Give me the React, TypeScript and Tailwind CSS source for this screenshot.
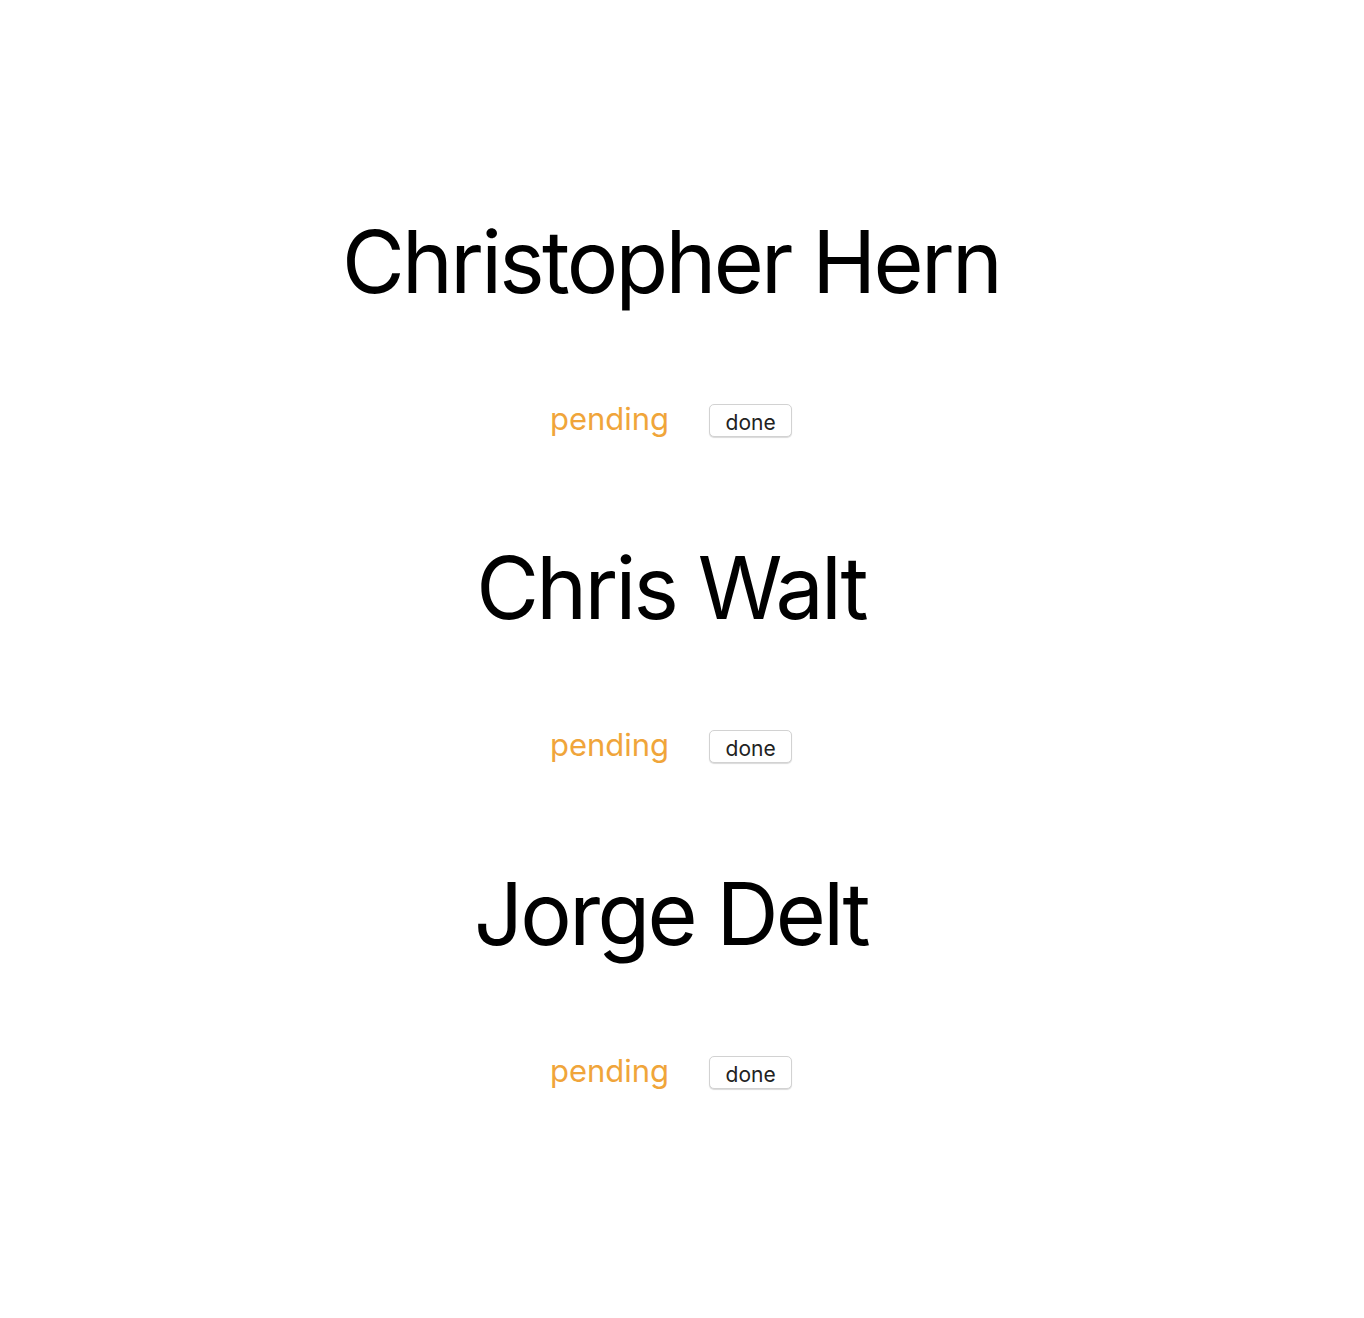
import React from "react";

const names = ["Christopher Hern", "Chris Walt", "Jorge Delt"];

export default function App() {
  return (
    <div className="min-h-[1318px] bg-white w-[1342px] pt-[212px]" style={{ fontFamily: "Inter, 'Liberation Sans', sans-serif" }}>
      {names.map((n, i) => (
        <section key={n} className={i === 0 ? "flex flex-col items-center" : "flex flex-col items-center mt-[101px]"}>
          <h1 className="h-[100px] flex items-center text-[86px] leading-none text-black tracking-[-2.7px]">{n}</h1>
          <div className="mt-[92px] h-[33px] flex items-center gap-[40px]">
            <span className="text-[31px] text-[#f0a53a] leading-none -mt-[5px]">pending</span>
            <button className="h-[33px] w-[83px] rounded-[5px] border border-[#d2d2d2] bg-white text-[21px] text-[#222] leading-none pt-[3px] shadow-[0_1px_1px_rgba(0,0,0,0.15)]">done</button>
          </div>
        </section>
      ))}
    </div>
  );
}
